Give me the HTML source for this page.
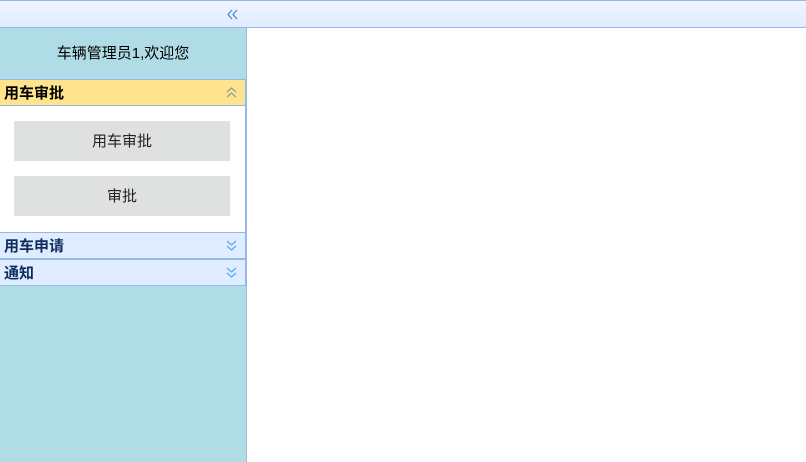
<!DOCTYPE html>
<html><head><meta charset="utf-8"><style>
*{margin:0;padding:0;box-sizing:border-box}
body{width:806px;height:462px;overflow:hidden;background:#fff;font-family:"Liberation Sans","Noto Sans CJK SC",sans-serif;font-size:15px;position:relative}
.left{position:absolute;left:0;top:0;width:247px;height:462px;background:#b0dde5;border-right:1px solid #95b8e7}
.bar{position:absolute;top:0;height:28px;background:linear-gradient(#eff5ff,#e0ecff);border-bottom:1px solid #95b8e7;border-top:1px solid #95b8e7}
.welcome{position:absolute;top:28px;left:0;width:246px;height:51px;text-align:center;line-height:51px;color:#000}
.ph{position:absolute;left:0;width:246px;height:27px;border-top:1px solid #95b8e7;border-bottom:1px solid #95b8e7;border-right:1px solid #95b8e7;font-weight:bold;line-height:27px;padding-left:4px}
.ph svg{position:absolute;right:8px;top:7px}
.content{position:absolute;top:106px;left:0;width:246px;height:126px;background:#fff;border-right:1px solid #95b8e7}
.btn{position:absolute;left:14px;width:216px;height:40px;background:#dfe1e0;text-align:center;line-height:41px;color:#222}
</style></head><body>
<div class="left">
<div class="bar" style="left:0;width:247px"><svg style="position:absolute;left:227px;top:8px" width="11" height="11" viewBox="0 0 11 11" fill="none" stroke="#4d8ad6" stroke-width="1.3"><path d="M5 1L1 5.5 5 10M10 1L6 5.5 10 10"/></svg></div>
<div class="welcome">车辆管理员1,欢迎您</div>
<div class="ph" style="top:79px;background:#ffe48d;color:#000">用车审批<svg width="11" height="11" viewBox="0 0 11 11" fill="none" stroke="#8aa49a" stroke-width="1.3"><path d="M1 5L5.5 1 10 5M1 10L5.5 6 10 10"/></svg></div>
<div class="content"><div class="btn" style="top:15px">用车审批</div><div class="btn" style="top:70px">审批</div></div>
<div class="ph" style="top:232px;background:#e0ecff;color:#0e2d5f">用车申请<svg width="11" height="11" viewBox="0 0 11 11" fill="none" stroke="#5aaee8" stroke-width="1.3"><path d="M1 1L5.5 5 10 1M1 6L5.5 10 10 6"/></svg></div>
<div class="ph" style="top:259px;background:#e0ecff;color:#0e2d5f">通知<svg width="11" height="11" viewBox="0 0 11 11" fill="none" stroke="#5aaee8" stroke-width="1.3"><path d="M1 1L5.5 5 10 1M1 6L5.5 10 10 6"/></svg></div>
</div>
<div class="bar" style="left:247px;width:559px"></div>
</body></html>
